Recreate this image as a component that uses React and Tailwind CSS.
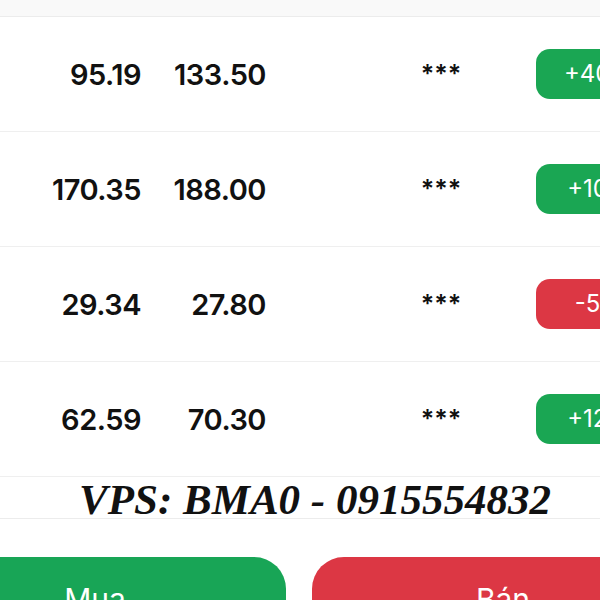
const rows = [
  { cost: '95.19', price: '133.50', change: '+40.24%', up: true },
  { cost: '170.35', price: '188.00', change: '+10.36%', up: true },
  { cost: '29.34', price: '27.80', change: '-5.25%', up: false },
  { cost: '62.59', price: '70.30', change: '+12.32%', up: true },
];

const num = { fontFamily: 'Inter, "Liberation Sans", sans-serif' };

export default function App() {
  return (
    <div className="w-[600px] h-[600px] overflow-hidden bg-white">
      <div className="h-[17px] bg-[#f9f9f9] border-b border-[#ececec]" />

      {rows.map((r) => (
        <div key={r.cost} className="h-[115px] flex items-center border-b border-[#efefef]" style={num}>
          <div className="w-[141px] shrink-0 text-right text-[29px] font-semibold text-[#111] tracking-[-0.5px] pt-[2px]">{r.cost}</div>
          <div className="w-[125px] shrink-0 text-right text-[29px] font-semibold text-[#111] tracking-[-0.5px] pt-[2px]">{r.price}</div>
          <div className="w-[270px] shrink-0 text-center text-[25px] font-semibold text-[#111] pl-[80px] pt-[2px]">***</div>
          <div
            className={`w-[162px] h-[50px] shrink-0 rounded-[14px] flex items-center justify-center text-white text-[24px] ${
              r.up ? 'bg-[#1aa653]' : 'bg-[#dc3744]'
            }`}
          >
            {r.change}
          </div>
        </div>
      ))}

      <div className="h-[42px] border-b border-[#ececec] flex items-center justify-center">
        <span
          className="text-[43px] font-bold italic text-[#111] leading-none pl-[30px] pt-[4px]"
          style={{ fontFamily: '"Liberation Serif", "Times New Roman", serif' }}
        >
          VPS: BMA0 - 0915554832
        </span>
      </div>

      <div className="flex gap-[26px] -ml-[96px] mt-[38px]" style={num}>
        <div className="w-[382px] h-[90px] shrink-0 rounded-[32px] bg-[#18a556] text-white text-[30px] text-center pt-[20px]">
          Mua
        </div>
        <div className="w-[382px] h-[90px] shrink-0 rounded-[32px] bg-[#dc3744] text-white text-[30px] text-center pt-[20px]">
          Bán
        </div>
      </div>
    </div>
  );
}
